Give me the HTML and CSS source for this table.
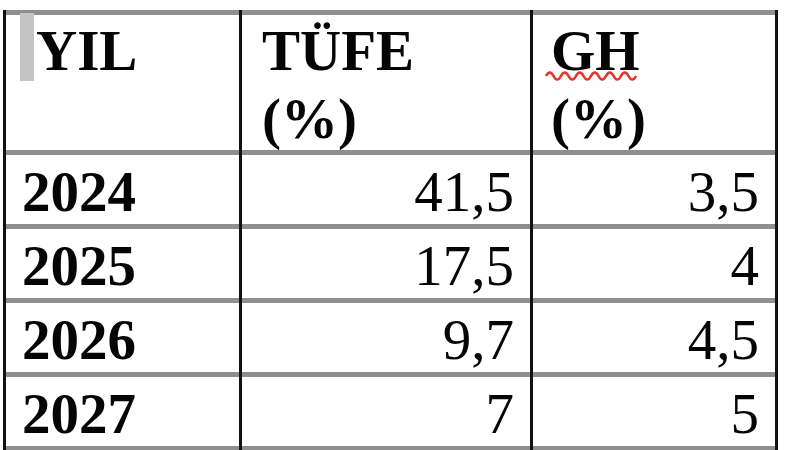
FILE: index.html
```html
<!DOCTYPE html>
<html lang="tr">
<head>
<meta charset="utf-8">
<title>Tablo</title>
<link rel="stylesheet" href="styles.css">
</head>
<body>
<div class="sheet">
  <div class="cell head first"><span class="cursor"></span>YIL</div>
  <div class="cell head second">TÜFE<br>(%)</div>
  <div class="cell head third"><span class="spell">GH<svg class="squiggle" width="94" height="14" viewBox="0 0 94 14"><path d="M1 7 Q4.75 0 8.5 7 T16 7 T23.5 7 T31 7 T38.5 7 T46 7 T53.5 7 T61 7 T68.5 7 T76 7 T83.5 7 T91 7" fill="none" stroke="#e8322c" stroke-width="2.6"/></svg></span><br>(%)</div>

  <div class="cell year">2024</div>
  <div class="cell num">41,5</div>
  <div class="cell num">3,5</div>

  <div class="cell year">2025</div>
  <div class="cell num">17,5</div>
  <div class="cell num">4</div>

  <div class="cell year">2026</div>
  <div class="cell num">9,7</div>
  <div class="cell num">4,5</div>

  <div class="cell year">2027</div>
  <div class="cell num">7</div>
  <div class="cell num">5</div>
</div>
</body>
</html>
```

FILE: styles.css
```css
html, body {
  margin: 0;
  padding: 0;
  background: #ffffff;
  overflow: hidden;
}

.sheet {
  display: grid;
  grid-template-columns: 233px 288px 242px;
  grid-template-rows: 140px 74px 74px 74px 79px;
  column-gap: 3px;
  padding: 0 3px;
  margin: 10px 0 0 3px;
  width: max-content;
  background: #111111;
}

.cell {
  box-sizing: border-box;
  background: #ffffff;
  border-top: 5px solid #8e8e8e;
  font-family: "Liberation Serif", "Times New Roman", serif;
  font-size: 57px;
  line-height: 68px;
  color: #050505;
  padding: 3px 16px 0 16px;
  position: relative;
}

.cell:nth-last-child(-n+3) {
  border-bottom: 5px solid #8e8e8e;
}

.head {
  font-weight: bold;
  padding-top: 2px;
}

.head.first {
  padding-left: 30px;
}

.head.second {
  padding-left: 20px;
}

.head.third {
  padding-left: 18px;
}

.cursor {
  position: absolute;
  left: 14px;
  top: -2px;
  width: 14px;
  height: 68px;
  background: #c4c4c4;
}

.spell {
  position: relative;
}

.squiggle {
  position: absolute;
  left: -6px;
  top: 50px;
}

.year {
  font-weight: bold;
}

.num {
  text-align: right;
}
```
